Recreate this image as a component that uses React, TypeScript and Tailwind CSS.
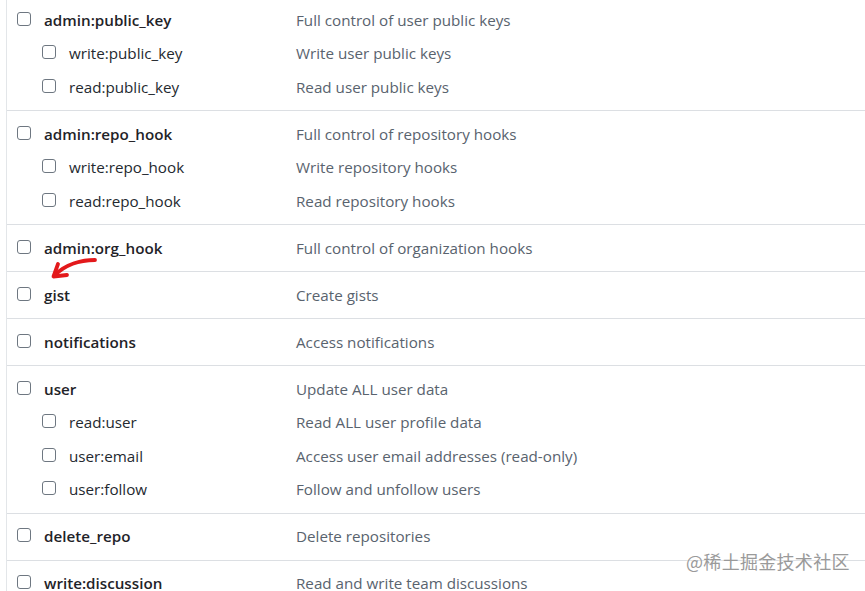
type Scope = { name: string; desc: string; children?: { name: string; desc: string }[] };

const scopes: Scope[] = [
  {
    name: "admin:public_key",
    desc: "Full control of user public keys",
    children: [
      { name: "write:public_key", desc: "Write user public keys" },
      { name: "read:public_key", desc: "Read user public keys" },
    ],
  },
  {
    name: "admin:repo_hook",
    desc: "Full control of repository hooks",
    children: [
      { name: "write:repo_hook", desc: "Write repository hooks" },
      { name: "read:repo_hook", desc: "Read repository hooks" },
    ],
  },
  { name: "admin:org_hook", desc: "Full control of organization hooks" },
  { name: "gist", desc: "Create gists" },
  { name: "notifications", desc: "Access notifications" },
  {
    name: "user",
    desc: "Update ALL user data",
    children: [
      { name: "read:user", desc: "Read ALL user profile data" },
      { name: "user:email", desc: "Access user email addresses (read-only)" },
      { name: "user:follow", desc: "Follow and unfollow users" },
    ],
  },
  { name: "delete_repo", desc: "Delete repositories" },
  { name: "write:discussion", desc: "Read and write team discussions" },
];

function Box() {
  return <span className="block w-[14px] h-[14px] rounded-[3px] border-[1.5px] border-[#6e7781] bg-white shrink-0" />;
}

function Row({ name, desc, sub }: { name: string; desc: string; sub?: boolean }) {
  return (
    <div className="flex items-center h-6">
      <div className={`flex items-center w-[289px] shrink-0 ${sub ? "pl-[35px]" : "pl-[10px]"}`}>
        <span className="-mt-[2px]">
          <Box />
        </span>
        <span className={`ml-[13px] ${sub ? "text-[#24292f]" : "font-semibold text-[#1f2328]"}`}>{name}</span>
      </div>
      <div className="text-[#59636e]">{desc}</div>
    </div>
  );
}

export default function App() {
  return (
    <div
      className="relative w-[865px] h-[591px] overflow-hidden bg-white text-[15.2px]"
      style={{ fontFamily: '"Open Sans", "Noto Sans", sans-serif' }}
    >
      <div className="ml-[6px] border-l border-[#e3e6e9] min-h-full">
        {scopes.map((s, i) => (
          <div
            key={s.name}
            className={`flex flex-col gap-[9.5px] border-b border-[#dcdfe3] ${i === 0 ? "pt-2 pb-[11px]" : "py-[11px]"}`}
          >
            <Row name={s.name} desc={s.desc} />
            {s.children?.map((c) => (
              <Row key={c.name} name={c.name} desc={c.desc} sub />
            ))}
          </div>
        ))}
      </div>

      <svg className="absolute left-0 top-0 pointer-events-none" width="865" height="591">
        <path d="M95 260 C 82 260, 66 264, 55 275" fill="none" stroke="#e3191b" strokeWidth="3.8" strokeLinecap="round" />
        <path d="M58 264 L 53.5 276.5 L 67 275" fill="none" stroke="#e3191b" strokeWidth="3.8" strokeLinecap="round" strokeLinejoin="round" />
      </svg>

      <div
        className="absolute left-[686px] top-[548px] text-[18px] text-[#9a9a9a] tracking-[0.3px]"
        style={{ fontFamily: '"Noto Sans CJK SC", sans-serif', textShadow: "0 0 2px #fff" }}
      >
        @稀土掘金技术社区
      </div>
    </div>
  );
}
